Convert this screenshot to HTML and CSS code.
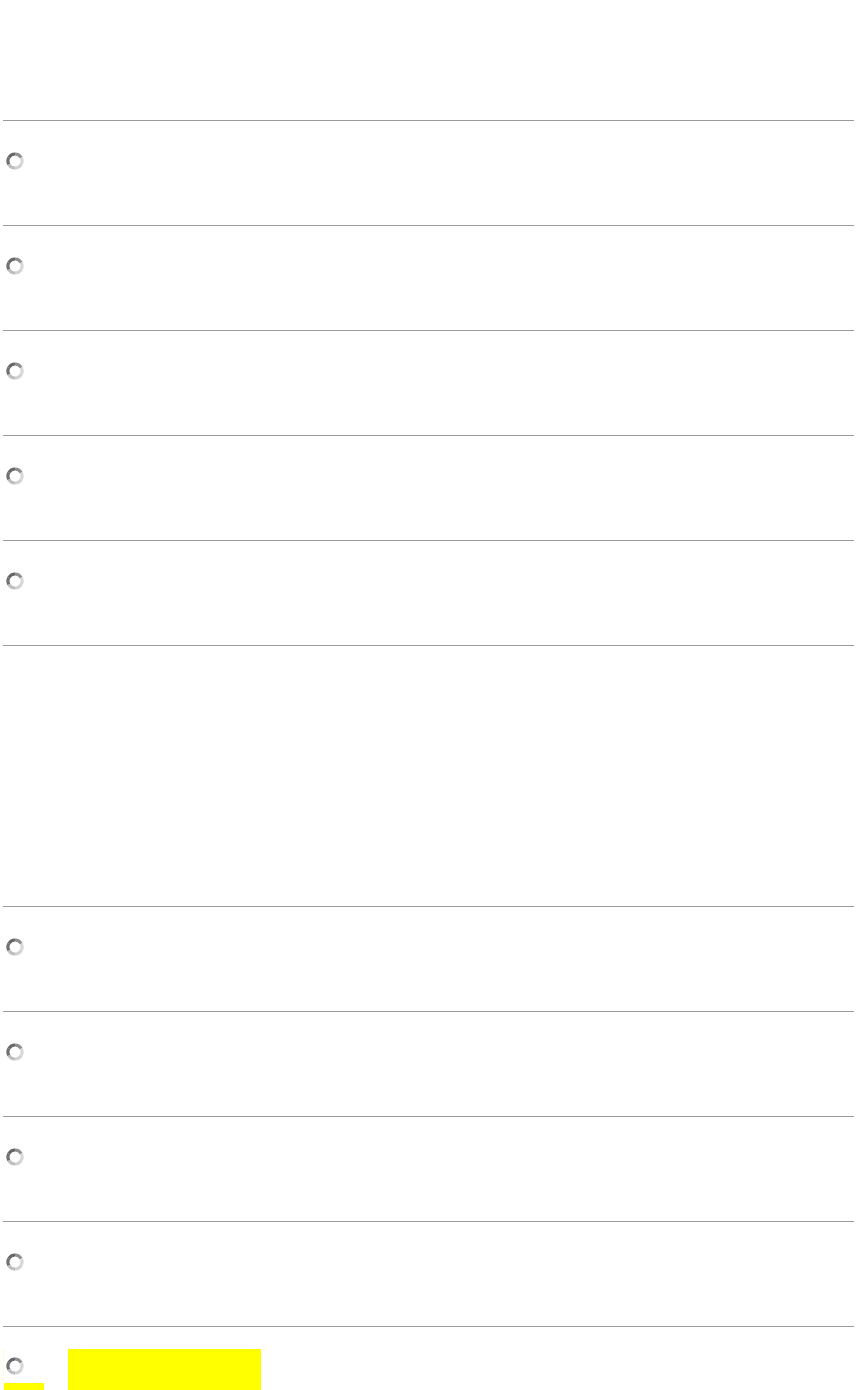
FILE: index.html
```html
<!DOCTYPE html>
<html>
<head>
<meta charset="utf-8">
<title>Loading list</title>
<link rel="stylesheet" href="styles.css">
</head>
<body>
<svg width="0" height="0" class="defs">
  <defs>
    <g id="spin">
      <path d="M9 2 A7 7 0 0 0 2.9 5.5" stroke="#666666" />
      <path d="M2.9 5.5 A7 7 0 0 0 2.9 12.5" stroke="#707070" />
      <path d="M2.9 12.5 A7 7 0 0 0 9 16" stroke="#bdbdbd" />
      <path d="M9 16 A7 7 0 0 0 15.1 12.5" stroke="#d2d2d2" />
      <path d="M15.1 12.5 A7 7 0 0 0 15.1 5.5" stroke="#d8d8d8" />
      <path d="M15.1 5.5 A7 7 0 0 0 9 2" stroke="#8f8f8f" />
    </g>
  </defs>
</svg>
<div class="list first">
  <div class="row"><svg class="spinner" viewBox="0 0 18 18"><use href="#spin"/></svg></div>
  <div class="row"><svg class="spinner" viewBox="0 0 18 18"><use href="#spin"/></svg></div>
  <div class="row"><svg class="spinner" viewBox="0 0 18 18"><use href="#spin"/></svg></div>
  <div class="row"><svg class="spinner" viewBox="0 0 18 18"><use href="#spin"/></svg></div>
  <div class="row"><svg class="spinner" viewBox="0 0 18 18"><use href="#spin"/></svg></div>
</div>
<div class="list second">
  <div class="row"><svg class="spinner" viewBox="0 0 18 18"><use href="#spin"/></svg></div>
  <div class="row"><svg class="spinner" viewBox="0 0 18 18"><use href="#spin"/></svg></div>
  <div class="row"><svg class="spinner" viewBox="0 0 18 18"><use href="#spin"/></svg></div>
  <div class="row"><svg class="spinner" viewBox="0 0 18 18"><use href="#spin"/></svg></div>
  <div class="row last">
    <div class="lead">
      <svg class="spinner" viewBox="0 0 18 18"><use href="#spin"/></svg>
      <div class="mark"></div>
    </div>
    <div class="highlight"></div>
  </div>
</div>
</body>
</html>
```

FILE: styles.css
```css
html, body {
  margin: 0;
  padding: 0;
  background: #ffffff;
  font-family: "Liberation Sans", Arial, sans-serif;
  overflow: hidden;
}

.defs {
  position: absolute;
  width: 0;
  height: 0;
}

.list {
  margin: 0 3px;
}

.list.first {
  margin-top: 120px;
  border-bottom: 1px solid #9c9c9c;
}

.list.second {
  margin-top: 260px;
}

.row {
  box-sizing: border-box;
  height: 105px;
  border-top: 1px solid #9c9c9c;
  padding: 31px 0 0 3px;
}

.spinner {
  display: block;
  width: 18px;
  height: 18px;
  fill: none;
  stroke-width: 3.2;
}

.row.last {
  display: flex;
  align-items: flex-start;
  padding: 22px 0 0 0;
  height: 90px;
}

.lead {
  width: 41px;
  height: 60px;
  border-left: 1px solid #fdfdd8;
  box-sizing: border-box;
  display: flex;
  flex-direction: column;
}

.lead .spinner {
  margin: 8px 0 0 2px;
}

.mark {
  margin-top: 8px;
  height: 20px;
  background: #ffff00;
}

.highlight {
  margin-left: 24px;
  width: 193px;
  height: 60px;
  background: #ffff00;
}
```
